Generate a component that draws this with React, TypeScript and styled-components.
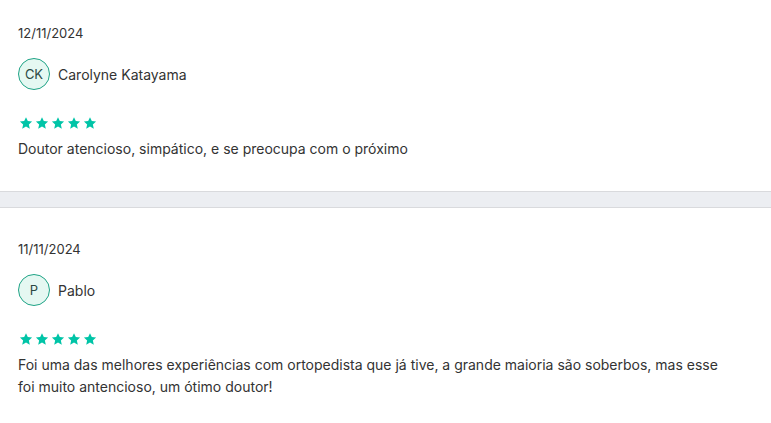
import React from "react";
import styled, { createGlobalStyle } from "styled-components";

const Global = createGlobalStyle`
  html, body { margin: 0; padding: 0; background: #ffffff; }
  body { font-family: Inter, "Noto Sans", Roboto, sans-serif; color: #333333; }
`;

const List = styled.div`
  display: flex;
  flex-direction: column;
`;

const Review = styled.section<{ $first?: boolean }>`
  display: flex;
  flex-direction: column;
  padding: ${(p) => (p.$first ? "25px" : "33px")} 18px 31px;
`;

const DateText = styled.div`
  font-size: 13px;
  line-height: 16px;
  color: #333333;
`;

const Author = styled.div`
  display: flex;
  align-items: center;
  gap: 8px;
  margin-top: 17px;
`;

const Avatar = styled.div`
  width: 32px;
  height: 32px;
  box-sizing: border-box;
  border-radius: 50%;
  border: 1px solid #1fa386;
  background: #e5f8f2;
  color: #2b4844;
  font-size: 13px;
  display: flex;
  align-items: center;
  justify-content: center;
`;

const Name = styled.span`
  font-size: 14px;
  color: #333333;
`;

const Stars = styled.div`
  display: flex;
  margin-top: 25px;
  height: 16px;
`;

const Body = styled.p`
  margin: 7px 0 0;
  font-size: 14px;
  line-height: 22px;
  color: #333333;
  max-width: 720px;
`;

const Divider = styled.div`
  height: 15px;
  background: #eceef2;
  border-top: 1px solid #d9dadd;
  border-bottom: 1px solid #d9dadd;
`;

const Star = () => (
  <svg width="16" height="16" viewBox="0 0 24 24">
    <path
      fill="#00c4a7"
      d="M12 3.2l2.7 5.9 6.4.7-4.8 4.3 1.4 6.4L12 17.2l-5.7 3.3 1.4-6.4-4.8-4.3 6.4-.7z"
    />
  </svg>
);

const reviews = [
  {
    date: "12/11/2024",
    initials: "CK",
    name: "Carolyne Katayama",
    text: "Doutor atencioso, simpático, e se preocupa com o próximo",
  },
  {
    date: "11/11/2024",
    initials: "P",
    name: "Pablo",
    text:
      "Foi uma das melhores experiências com ortopedista que já tive, a grande maioria são soberbos, mas esse foi muito antencioso, um ótimo doutor!",
  },
];

export default function App() {
  return (
    <>
      <Global />
      <List>
        {reviews.map((r, i) => (
          <React.Fragment key={r.date}>
            {i > 0 && <Divider />}
            <Review $first={i === 0}>
              <DateText>{r.date}</DateText>
              <Author>
                <Avatar>{r.initials}</Avatar>
                <Name>{r.name}</Name>
              </Author>
              <Stars>
                {[0, 1, 2, 3, 4].map((s) => (
                  <Star key={s} />
                ))}
              </Stars>
              <Body>{r.text}</Body>
            </Review>
          </React.Fragment>
        ))}
      </List>
    </>
  );
}
